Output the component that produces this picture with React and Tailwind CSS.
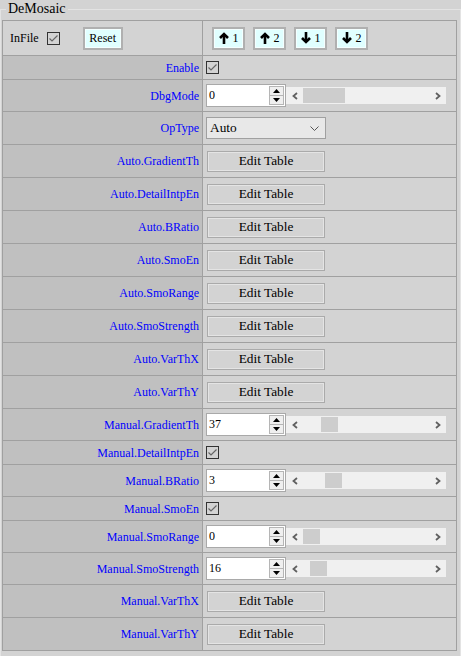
import React from 'react';

const rows = [
  { label: 'Enable', kind: 'check' },
  { label: 'DbgMode', kind: 'spin', value: '0', thumb: 'ml-0 w-[42px]' },
  { label: 'OpType', kind: 'select' },
  { label: 'Auto.GradientTh', kind: 'edit' },
  { label: 'Auto.DetailIntpEn', kind: 'edit' },
  { label: 'Auto.BRatio', kind: 'edit' },
  { label: 'Auto.SmoEn', kind: 'edit' },
  { label: 'Auto.SmoRange', kind: 'edit' },
  { label: 'Auto.SmoStrength', kind: 'edit' },
  { label: 'Auto.VarThX', kind: 'edit' },
  { label: 'Auto.VarThY', kind: 'edit' },
  { label: 'Manual.GradientTh', kind: 'spin', value: '37', thumb: 'ml-[18px] w-[17px]' },
  { label: 'Manual.DetailIntpEn', kind: 'check' },
  { label: 'Manual.BRatio', kind: 'spin', value: '3', thumb: 'ml-[22px] w-[17px]' },
  { label: 'Manual.SmoEn', kind: 'check' },
  { label: 'Manual.SmoRange', kind: 'spin', value: '0', thumb: 'ml-0 w-[17px]' },
  { label: 'Manual.SmoStrength', kind: 'spin', value: '16', thumb: 'ml-[7px] w-[17px]' },
  { label: 'Manual.VarThX', kind: 'edit' },
  { label: 'Manual.VarThY', kind: 'edit' },
];

const heights = { check: 'h-[24px]', spin: 'h-[32px]', select: 'h-[33px]', edit: 'h-[33px]' };

function Check() {
  return (
    <svg width="13" height="13" viewBox="0 0 13 13" className="block">
      <rect x="0.5" y="0.5" width="12" height="12" fill="none" stroke="#333" />
      <polyline points="2.5,6.5 5,9 10.5,3.5" fill="none" stroke="#666" strokeWidth="1.2" />
    </svg>
  );
}

function Arrow({ down }) {
  return (
    <svg width="10" height="12" viewBox="0 0 10 12" className={down ? 'block rotate-180' : 'block'}>
      <polyline points="1,6 5,2 9,6" fill="none" stroke="#000" strokeWidth="2.6" />
      <line x1="5" y1="2.5" x2="5" y2="12" stroke="#000" strokeWidth="2.6" />
    </svg>
  );
}

function CyanButton({ children, className }) {
  return (
    <div className={'flex h-[23px] items-center justify-center border-2 border-[#b0b0b0] bg-[#e0ffff] text-[12px] shadow-[inset_0_0_0_1px_#f4ffff] ' + className}>
      {children}
    </div>
  );
}

function Spin({ value, thumb }) {
  return (
    <div className="flex items-center">
      <div className="flex h-[23px] w-[80px] border border-[#a9a9a9] bg-white">
        <span className="flex-1 pl-[2px] pt-[2px] text-[12px] leading-[16px]">{value}</span>
        <div className="my-px mr-px flex w-[15px] flex-col">
          <span className="flex flex-1 items-center justify-center border border-[#b5b5b5] bg-[#efefef]">
            <svg width="7" height="4" viewBox="0 0 7 4"><polygon points="0,4 3.5,0 7,4" fill="#000" /></svg>
          </span>
          <span className="flex flex-1 items-center justify-center border border-t-0 border-[#b5b5b5] bg-[#efefef]">
            <svg width="7" height="4" viewBox="0 0 7 4"><polygon points="0,0 3.5,4 7,0" fill="#000" /></svg>
          </span>
        </div>
      </div>
      <div className="flex h-[17px] w-[160px] items-stretch bg-[#f0f0f0]">
        <span className="flex w-[17px] items-center justify-center">
          <svg width="6" height="8" viewBox="0 0 6 8"><polyline points="5,1 1.5,4 5,7" fill="none" stroke="#606060" strokeWidth="1.8" /></svg>
        </span>
        <div className="flex flex-1 py-px">
          <div className={'h-full bg-[#cdcdcd] ' + thumb} />
        </div>
        <span className="flex w-[17px] items-center justify-center">
          <svg width="6" height="8" viewBox="0 0 6 8"><polyline points="1,1 4.5,4 1,7" fill="none" stroke="#606060" strokeWidth="1.8" /></svg>
        </span>
      </div>
    </div>
  );
}

function Control({ row }) {
  if (row.kind === 'check') return <Check />;
  if (row.kind === 'spin') return <Spin value={row.value} thumb={row.thumb} />;
  if (row.kind === 'select') {
    return (
      <div className="flex h-[22px] w-[120px] items-center justify-between border border-[#a0a0a0] bg-[#e8e8e8] pl-[3px] pr-[6px] text-[13.33px]">
        <span>Auto</span>
        <svg width="9" height="5" viewBox="0 0 9 5"><polyline points="0.5,0.5 4.5,4.5 8.5,0.5" fill="none" stroke="#555" strokeWidth="1" /></svg>
      </div>
    );
  }
  return (
    <div className="ml-px flex h-[21px] w-[118px] items-center justify-center border border-[#aaaaaa] bg-[#d3d3d3] text-[13.33px] shadow-[inset_0_0_0_1px_#e4e4e4]">
      Edit Table
    </div>
  );
}

export default function App() {
  return (
    <div className="min-h-screen bg-[#d3d3d3] pt-px font-['Liberation_Serif',serif] text-black">
      <fieldset className="border border-[#e3e3e3] pb-[8px]">
        <legend className="ml-[5px] px-[2px] text-[14px] leading-[16px]">DeMosaic</legend>
        <div className="ml-px mt-[3px] w-[455px] border border-[#a0a0a0]">
          {/* header */}
          <div className="flex h-[34px]">
            <div className="flex w-[200px] items-center border-r border-[#a0a0a0] pl-[7px] text-[12px]">
              <span>InFile</span>
              <span className="ml-[8px]"><Check /></span>
              <CyanButton className="ml-[23px] w-[40px]">Reset</CyanButton>
            </div>
            <div className="flex flex-1 items-center gap-[8px] pl-[9px]">
              <CyanButton className="w-[33px] gap-[4px]"><Arrow /><span>1</span></CyanButton>
              <CyanButton className="w-[33px] gap-[4px]"><Arrow /><span>2</span></CyanButton>
              <CyanButton className="w-[33px] gap-[4px]"><Arrow down /><span>1</span></CyanButton>
              <CyanButton className="w-[33px] gap-[4px]"><Arrow down /><span>2</span></CyanButton>
            </div>
          </div>
          {rows.map((row) => (
            <div key={row.label} className={'flex border-t border-[#a0a0a0] ' + heights[row.kind]}>
              <div className="flex w-[200px] items-center justify-end border-r border-[#a0a0a0] bg-[#c0c0c0] pr-[3px] text-[12px] text-[#0000ff]">
                {row.label}
              </div>
              <div className="flex flex-1 items-center pl-[3px]">
                <Control row={row} />
              </div>
            </div>
          ))}
        </div>
      </fieldset>
    </div>
  );
}
